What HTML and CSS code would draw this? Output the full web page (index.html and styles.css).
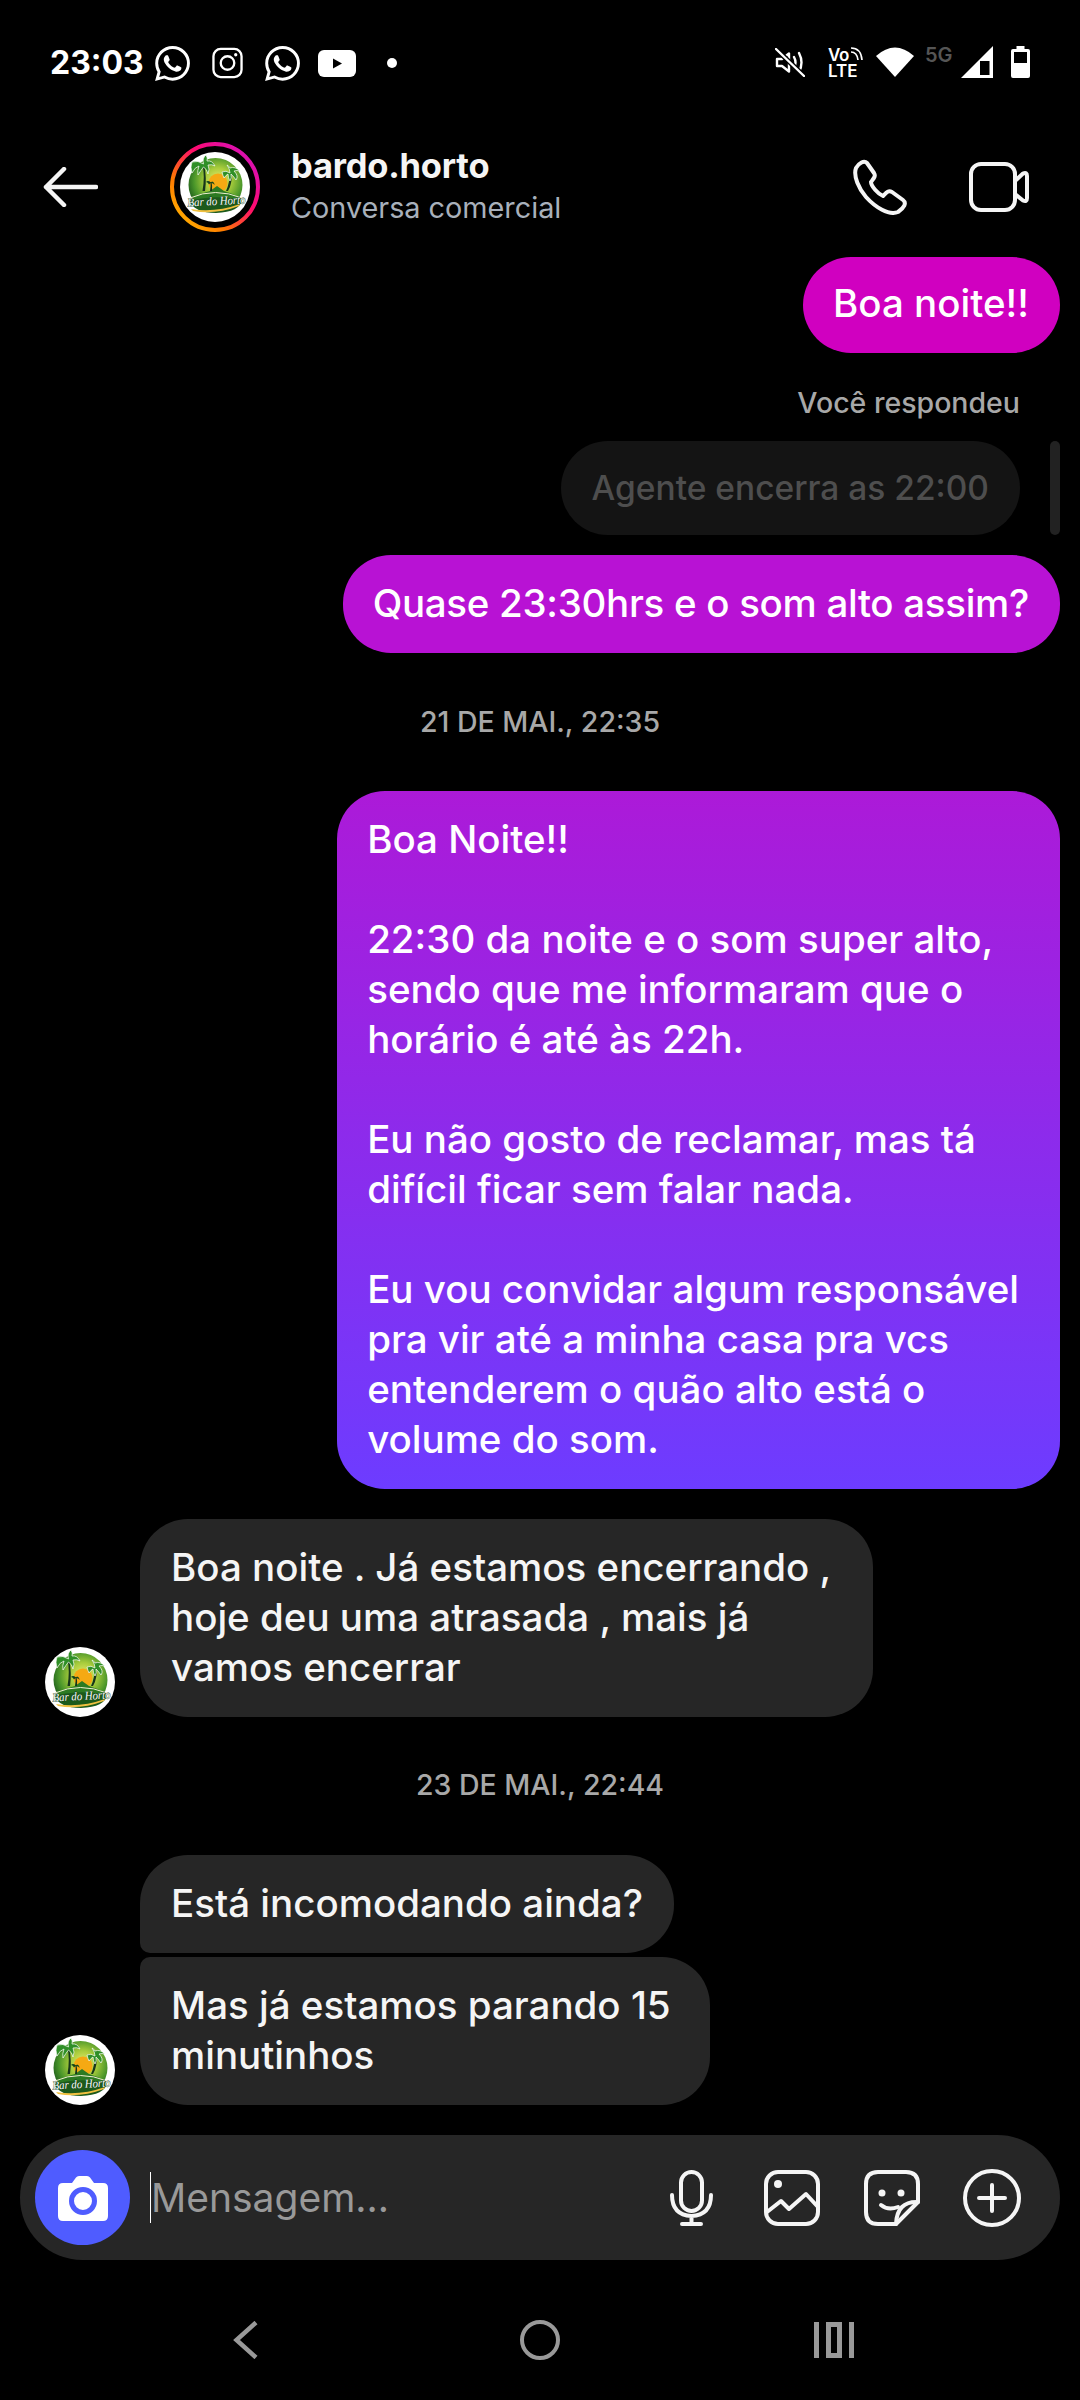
FILE: index.html
```html
<!DOCTYPE html>
<html lang="pt-BR">
<head>
<meta charset="utf-8">
<title>bardo.horto</title>
<link rel="stylesheet" href="styles.css">
</head>
<body>
<svg class="defs" width="0" height="0" aria-hidden="true">
  <defs>
    <linearGradient id="ring" x1="0" y1="1" x2="1" y2="0">
      <stop offset="0" stop-color="#ffc800"/><stop offset=".3" stop-color="#ff7a00"/><stop offset=".6" stop-color="#ff0a70"/><stop offset="1" stop-color="#c913d0"/>
    </linearGradient>
    <radialGradient id="disc" cx=".55" cy=".42" r=".6">
      <stop offset="0" stop-color="#f0ec70"/><stop offset=".4" stop-color="#a8cc3c"/><stop offset=".75" stop-color="#4a962a"/><stop offset="1" stop-color="#1f5d1c"/>
    </radialGradient>
    <symbol id="logo" viewBox="0 0 70 70">
      <circle cx="35" cy="35" r="35" fill="#fff"/>
      <circle cx="35.500" cy="33" r="27" fill="url(#disc)"/>
      <circle cx="38" cy="31" r="9.500" fill="#f5a913"/>
      <path d="M11 46Q22 41 30 39L37 34 44 39Q54 42 61 46L60 52H12Z" fill="#2c7a22"/>
      <path d="M10 46Q35 35 62 46" fill="none" stroke="#f0efd0" stroke-width="1"/>
      <path d="M9 49Q35 42 62 48Q60 60 36 61Q15 61 9 49Z" fill="#1c5a1b"/>
      <path d="M22.500 39Q25 24 22.500 12L24 12Q27 26 25 39Z" fill="#17361a"/>
      <path d="M23.500 12Q18 8 12 10Q10 15 12 21Q15 15 19 14Q17 19 18 23Q21 18 23.500 15Q27 17 28 22Q30 17 28 13Q32 12 35 14Q32 8 27 9Q28 6 26 3Q22 6 23.500 12Z" fill="#2f8f27" stroke="#fff" stroke-width=".7"/>
      <path d="M46 39Q50 30 49.500 21L51 21Q53 30 48 39Z" fill="#17361a"/>
      <path d="M50 21Q46 18 42 20Q43 24 44 26Q46 23 48 22Q48 26 50 29Q52 26 51 22Q54 25 56 28Q59 24 54 19Q57 18 60 19Q55 14 50 16Q49 14 47 13Q50 17 50 21Z" fill="#2f8f27" stroke="#fff" stroke-width=".7"/>
      <path d="M30 39Q31 34 30.500 30L31.500 30Q32.500 34 32 39Z" fill="#17361a"/>
      <path d="M31 30.500Q28 28 26 30Q28 30 29 32.500Q30 31 31 31Q33.500 31 34.500 33Q34.500 30 32 29.500Z" fill="#14451a"/>
      <path d="M11 57Q35 61 60 52L59 54Q35 63 13 59Z" fill="#f0c040"/>
      <text class="logo-text" x="36.500" y="53" text-anchor="middle" textLength="58" lengthAdjust="spacingAndGlyphs" transform="rotate(-3 36 50)">Bar do Horto</text>
    </symbol>
    <symbol id="wa" viewBox="0 0 24 24">
      <path fill="#fff" d="M17.472 14.382c-.297-.149-1.758-.867-2.03-.967-.273-.099-.471-.148-.67.15-.197.297-.767.966-.94 1.164-.173.199-.347.223-.644.075-.297-.15-1.255-.463-2.39-1.475-.883-.788-1.48-1.761-1.653-2.059-.173-.297-.018-.458.13-.606.134-.133.298-.347.446-.52.149-.174.198-.298.298-.497.099-.198.05-.371-.025-.52-.075-.149-.669-1.612-.916-2.207-.242-.579-.487-.5-.669-.51-.173-.008-.371-.01-.57-.01-.198 0-.52.074-.792.372-.272.297-1.04 1.016-1.04 2.479 0 1.462 1.065 2.875 1.213 3.074.149.198 2.096 3.2 5.077 4.487.709.306 1.262.489 1.694.625.712.227 1.36.195 1.871.118.571-.085 1.758-.719 2.006-1.413.248-.694.248-1.289.173-1.413-.074-.124-.272-.198-.57-.347m-5.421 7.403h-.004a9.87 9.87 0 01-5.031-1.378l-.361-.214-3.741.982.998-3.648-.235-.374a9.86 9.86 0 01-1.51-5.26c.001-5.45 4.436-9.884 9.888-9.884 2.64 0 5.122 1.03 6.988 2.898a9.825 9.825 0 012.893 6.994c-.003 5.45-4.437 9.884-9.885 9.884m8.413-18.297A11.815 11.815 0 0012.05 0C5.495 0 .16 5.335.157 11.892c0 2.096.547 4.142 1.588 5.945L.057 24l6.305-1.654a11.882 11.882 0 005.683 1.448h.005c6.554 0 11.89-5.335 11.893-11.893a11.821 11.821 0 00-3.48-8.413Z"/>
    </symbol>
  </defs>
</svg>

<div class="screen">
  <div class="statusbar">
    <div class="status-left">
      <span class="clock">23:03</span>
      <svg class="ic-wa"><use href="#wa"/></svg>
      <svg class="ic-ig" viewBox="0 0 32 32" fill="none" stroke="#fff" stroke-width="2.400"><rect x="1.500" y="1.500" width="29" height="29" rx="7.500"/><circle cx="16" cy="16" r="7"/><circle cx="24.500" cy="7.500" r="1.700" fill="#fff" stroke="none"/></svg>
      <svg class="ic-wa"><use href="#wa"/></svg>
      <svg class="ic-yt" viewBox="0 0 38 27"><rect width="38" height="27" rx="6" fill="#fff"/><path d="M15 8.500v10l9-5z" fill="#000"/></svg>
      <span class="dot"></span>
    </div>
    <div class="status-right">
      <svg class="ic-mute" viewBox="0 0 30 29" fill="none" stroke="#fff" stroke-width="2.400"><path d="M2 11h5l7-5.500v18L7 18H2z" stroke-linejoin="round"/><path d="M19 9q3 5.500 0 11M24 5q5 9.500 0 19" stroke-linecap="round"/><path d="M1 1l28 27" stroke="#000" stroke-width="5"/><path d="M1 1l28 27" stroke-linecap="round"/></svg>
      <div class="volte"><div class="volte-top"><span class="vo">Vo</span><svg class="ic-volte-w" viewBox="0 0 13 13" fill="none" stroke="#fff" stroke-width="1.700"><path d="M1 1q10 0 11 12M1 5q6 0 7 8"/></svg></div><span class="lte">LTE</span></div>
      <svg class="ic-wifi" viewBox="0 0 38 31"><path d="M0 10Q19-7 38 10L19 31z" fill="#fff"/></svg>
      <span class="fiveg">5G</span>
      <svg class="ic-signal" viewBox="0 0 32 32"><path d="M32 0v32H0z" fill="#fff"/><path d="M19 15h9.500v14H19z" fill="#000"/></svg>
      <svg class="ic-batt" viewBox="0 0 19 32"><path d="M5.500 0h8v3H17a2 2 0 0 1 2 2v25a2 2 0 0 1-2 2H2a2 2 0 0 1-2-2V5a2 2 0 0 1 2-2h3.500z" fill="#fff"/><rect x="3" y="6" width="13" height="11" fill="#000"/></svg>
    </div>
  </div>

  <header class="topbar">
    <svg class="ic-back" viewBox="0 0 55 40" fill="none" stroke="#f5f5f5" stroke-width="4.500" stroke-linecap="round" stroke-linejoin="round"><path d="M53 20H3M21 2L3 20l18 18"/></svg>
    <div class="avatar-ring">
      <svg class="ring-svg" viewBox="0 0 90 90"><circle cx="45" cy="45" r="43" fill="none" stroke="url(#ring)" stroke-width="4"/></svg>
      <svg class="logo-lg"><use href="#logo"/></svg>
    </div>
    <div class="title">
      <div class="name">bardo.horto</div>
      <div class="sub">Conversa comercial</div>
    </div>
    <svg class="ic-phone" viewBox="0 0 56 56" fill="none" stroke="#f5f5f5" stroke-width="4" stroke-linejoin="round"><path d="M5 9C8 4 13 1 16 4L23 14C25 17 23 19 20 23C20 27 27 35 32 37C35 34 37 31 41 33L52 41C56 44 53 49 47 53C38 57 24 48 15 38C8 30 2 17 5 9Z"/></svg>
    <svg class="ic-video" viewBox="0 0 60 50" fill="none" stroke="#f5f5f5" stroke-width="4" stroke-linejoin="round"><rect x="2" y="2" width="44" height="46" rx="10"/><path d="M46 19L54 11.500Q58 9.500 58 14V36Q58 40.500 54 38.500L46 32"/></svg>
  </header>

  <main class="chat">
    <div class="row-out"><div class="bubble out b1">Boa noite!!</div></div>
    <div class="reply-label">Você respondeu</div>
    <div class="row-out reply-row"><div class="bubble quoted">Agente encerra as 22:00</div><span class="reply-bar"></span></div>
    <div class="row-out"><div class="bubble out b2">Quase 23:30hrs e o som alto assim?</div></div>
    <div class="stamp stamp-a">21 DE MAI., 22:35</div>
    <div class="row-out"><div class="bubble out b3">Boa Noite!!<br><br>22:30 da noite e o som super alto,<br>sendo que me informaram que o<br>horário é até às 22h.<br><br>Eu não gosto de reclamar, mas tá<br>difícil ficar sem falar nada.<br><br>Eu vou convidar algum responsável<br>pra vir até a minha casa pra vcs<br>entenderem o quão alto está o<br>volume do som.</div></div>
    <div class="row-in first"><svg class="logo-sm"><use href="#logo"/></svg><div class="bubble in m1">Boa noite . Já estamos encerrando ,<br>hoje deu uma atrasada , mais já<br>vamos encerrar</div></div>
    <div class="stamp stamp-b">23 DE MAI., 22:44</div>
    <div class="row-in"><span class="logo-gap"></span><div class="bubble in top">Está incomodando ainda?</div></div>
    <div class="row-in tight"><svg class="logo-sm"><use href="#logo"/></svg><div class="bubble in bottom">Mas já estamos parando 15<br>minutinhos</div></div>
  </main>

  <div class="composer">
    <div class="cam"><svg class="ic-cam" viewBox="0 0 50 46"><path d="M5 8h9l4-5.500Q19 1 21 1h8q2 0 3 1.500L36 8h9q5 0 5 5v28q0 5-5 5H5q-5 0-5-5V13q0-5 5-5z" fill="#fff"/><circle cx="25" cy="26" r="11.500" fill="#fff" stroke="#4f5cff" stroke-width="5"/></svg></div>
    <span class="caret"></span>
    <span class="placeholder">Mensagem...</span>
    <svg class="ic-mic" viewBox="0 0 43 56" fill="none" stroke="#f5f5f5" stroke-width="4" stroke-linecap="round"><rect x="11" y="2" width="21" height="39" rx="10.500"/><path d="M2 25q0 20 19.500 21Q41 45 41 25M21.500 46v8M12 54h19"/></svg>
    <svg class="ic-img" viewBox="0 0 56 56" fill="none" stroke="#f5f5f5" stroke-width="4" stroke-linejoin="round"><rect x="2" y="2" width="52" height="52" rx="12"/><path d="M3 42L17 31l8 8 17-15 12 13"/><circle cx="14" cy="14" r="4" fill="#f5f5f5" stroke="none"/></svg>
    <svg class="ic-sticker" viewBox="0 0 56 56" fill="none" stroke="#f5f5f5" stroke-width="4" stroke-linejoin="round" stroke-linecap="round"><path d="M54 32V14Q54 2 42 2H14Q2 2 2 14V42Q2 54 14 54H32Z"/><path d="M54 32Q33 31 32 54" /><path d="M17 35q7 6 17 2"/><circle cx="18" cy="23" r="3.500" fill="#f5f5f5" stroke="none"/><circle cx="37" cy="23" r="3.500" fill="#f5f5f5" stroke="none"/></svg>
    <svg class="ic-plus" viewBox="0 0 58 58" fill="none" stroke="#f5f5f5" stroke-width="4" stroke-linecap="round"><circle cx="29" cy="29" r="27"/><path d="M29 16v26M16 29h26"/></svg>
  </div>

  <nav class="navbar">
    <svg class="nav-back" viewBox="0 0 25 38" fill="none" stroke="#999" stroke-width="4.500"><path d="M23 1.500L3.500 19 23 36.500"/></svg>
    <span class="nav-home"></span>
    <div class="nav-recents"><span class="rb"></span><span class="rc"></span><span class="rb"></span></div>
  </nav>
</div>
</body>
</html>
```

FILE: styles.css
```css
* { box-sizing: border-box; }
html, body { margin: 0; padding: 0; background: #000; }
body { width: 1080px; height: 2400px; overflow: hidden; font-family: Inter, "Noto Sans", sans-serif; color: #fff; }
.defs { position: absolute; }
.screen { width: 1080px; height: 2400px; display: flex; flex-direction: column; }

.statusbar { height: 124px; padding: 45px 50px 0 50px; display: flex; justify-content: space-between; align-items: flex-start; flex: none; }
.status-left { display: flex; align-items: center; height: 36px; }
.clock { font-size: 32px; font-weight: 700; line-height: 36px; width: 105px; }
.ic-wa { width: 35px; height: 35px; margin-right: 22px; }
.ic-ig { width: 31px; height: 32px; margin-right: 22px; }
.ic-yt { width: 38px; height: 27px; margin-left: -4px; }
.dot { width: 10px; height: 10px; border-radius: 50%; background: #fff; margin-left: 31px; }
.status-right { display: flex; align-items: flex-start; height: 36px; }
.ic-mute { width: 30px; height: 29px; margin-top: 3px; margin-right: 23px; }
.volte { width: 35px; margin-top: 2px; margin-right: 13px; font-weight: 600; display: flex; flex-direction: column; }
.volte-top { display: flex; height: 16px; align-items: flex-start; }
.vo { font-size: 17px; line-height: 16px; letter-spacing: -.5px; }
.ic-volte-w { width: 13px; height: 13px; margin-left: 1px; }
.lte { font-size: 17px; line-height: 16px; }
.ic-wifi { width: 38px; height: 31px; margin-top: 1px; margin-right: 11px; }
.fiveg { font-size: 20px; line-height: 20px; font-weight: 600; color: #555; width: 36px; }
.ic-signal { width: 32px; height: 32px; margin-top: 1px; margin-right: 18px; }
.ic-batt { width: 19px; height: 32px; margin-top: 1px; }

.topbar { height: 126px; padding-left: 43px; display: flex; align-items: center; flex: none; }
.ic-back { width: 55px; height: 40px; margin-right: 72px; }
.avatar-ring { position: relative; width: 90px; height: 90px; margin-right: 31px; display: flex; align-items: center; justify-content: center; flex: none; }
.ring-svg { position: absolute; inset: 0; width: 90px; height: 90px; }
.logo-lg { width: 70px; height: 70px; }
.logo-text { font-family: "Liberation Serif", serif; font-style: italic; font-weight: 400; font-size: 12px; fill: #fff; stroke: #14451a; stroke-width: .8px; paint-order: stroke; }
.title { width: 560px; flex: none; }
.name { font-size: 34.500px; font-weight: 700; line-height: 42px; color: #f5f5f5; letter-spacing: -.2px; }
.sub { font-size: 28.800px; line-height: 42px; color: #a8b0bb; }
.ic-phone { width: 56px; height: 56px; flex: none; }
.ic-video { width: 60px; height: 50px; margin-left: 62px; flex: none; }

.chat { flex: 1; display: flex; flex-direction: column; padding: 7px 20px 0 0; }
.row-out { display: flex; justify-content: flex-end; }
.bubble { font-size: 38.500px; font-weight: 450; line-height: 50px; padding: 23px 31px 25px 30px; border-radius: 48px; }
.out.b1 { background: #d000c0; padding: 21px 31px 25px 30px; }
.out.b2 { background: #b812d4; margin-top: 20px; letter-spacing: -.3px; }
.out.b3 { background: linear-gradient(180deg, #ac1ad8 0%, #6d3cff 100%); padding-right: 41px; }
.reply-label { align-self: flex-end; margin: 31px 40px 0 0; font-size: 28.500px; font-weight: 450; line-height: 38px; color: #a8a8a8; }
.reply-row { margin-top: 19px; gap: 30px; height: 94px; }
.quoted { background: #141414; color: #4e4e4e; font-size: 33.500px; line-height: 48px; border-radius: 47px; padding: 23px 31px; }
.reply-bar { width: 10px; border-radius: 5px; background: #222; }
.stamp { font-size: 28.500px; font-weight: 450; line-height: 38px; color: #a8a8a8; text-align: center; margin-left: 20px; align-self: center; }
.stamp-a { margin-top: 50px; }
.stamp-b { margin-top: 49px; }
.stamp-a + .row-out { margin-top: 50px; }
.row-in { display: flex; align-items: flex-end; padding-left: 45px; }
.row-in.first { margin-top: 30px; }
.stamp-b + .row-in { margin-top: 51px; }
.row-in.tight { margin-top: 4px; }
.logo-sm { width: 70px; height: 70px; margin-right: 25px; flex: none; }
.logo-gap { width: 70px; margin-right: 25px; flex: none; }
.in { background: #262626; color: #f5f5f5; padding-left: 31px; }
.in.m1 { padding-right: 42px; }
.in.top { border-bottom-left-radius: 10px; padding-right: 31px; }
.in.bottom { border-top-left-radius: 10px; padding-right: 39px; }

.composer { margin: 0 20px; height: 125px; background: #262626; border-radius: 62.500px; display: flex; align-items: center; padding-left: 15px; flex: none; }
.cam { width: 95px; height: 95px; border-radius: 50%; background: #4f5cff; display: flex; align-items: center; justify-content: center; flex: none; }
.ic-cam { width: 50px; height: 46px; }
.caret { width: 1px; height: 51px; background: #fff; margin-left: 20px; flex: none; }
.placeholder { font-size: 39px; color: #999; width: 519px; flex: none; }
.ic-mic { width: 43px; height: 56px; margin-right: 51px; flex: none; }
.ic-img { width: 56px; height: 56px; margin-right: 44px; flex: none; }
.ic-sticker { width: 56px; height: 56px; margin-right: 43px; flex: none; }
.ic-plus { width: 58px; height: 58px; flex: none; }

.navbar { height: 140px; padding: 20px 0 0 233px; display: flex; align-items: center; flex: none; }
.nav-back { width: 25px; height: 38px; margin-right: 262px; }
.nav-home { width: 40px; height: 40px; border: 4.500px solid #999; border-radius: 50%; margin-right: 254px; }
.nav-recents { display: flex; gap: 7px; height: 36px; }
.rb { width: 5px; background: #999; }
.rc { width: 16px; border: 5px solid #999; }
```
